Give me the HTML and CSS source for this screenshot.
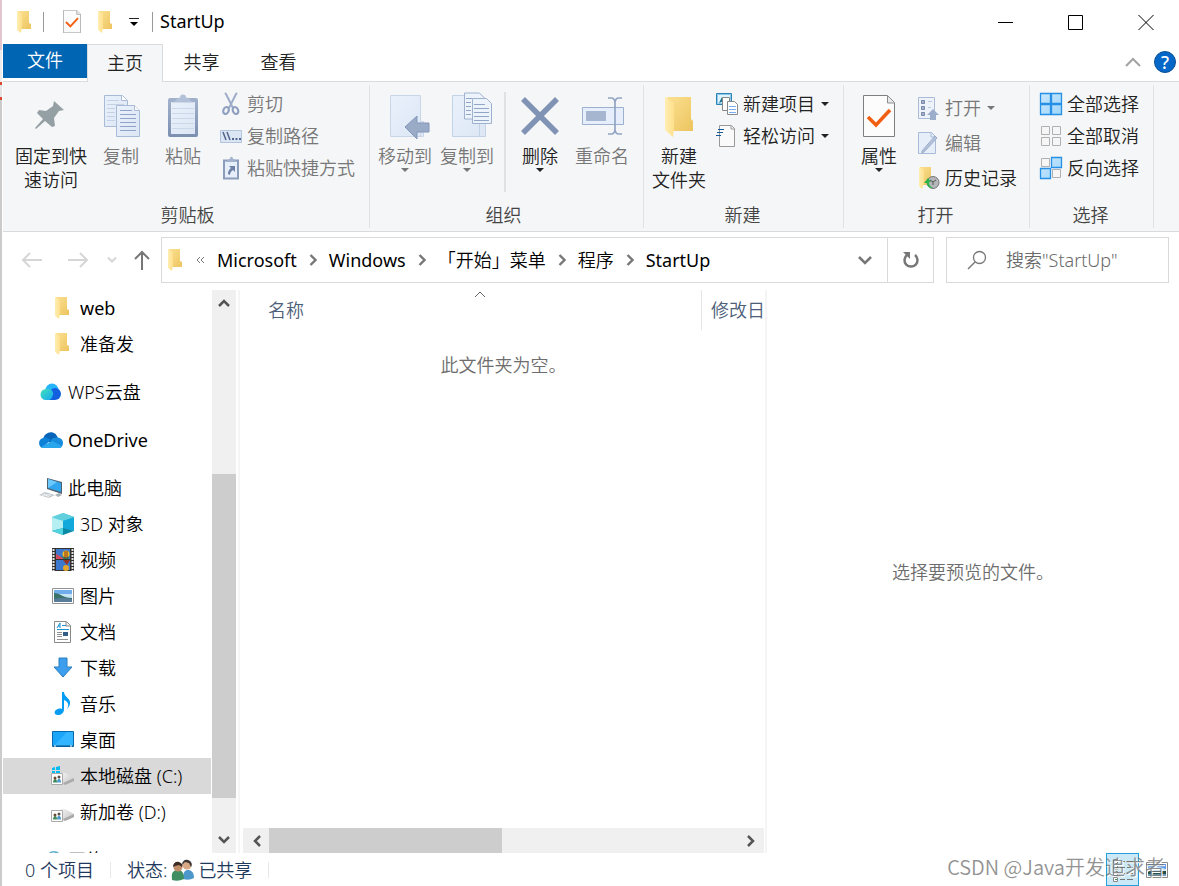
FILE: index.html
```html
<!DOCTYPE html>
<html lang="zh-CN">
<head>
<meta charset="utf-8">
<title>StartUp</title>
<link rel="stylesheet" href="styles.css">
</head>
<body>
<svg class="defs" aria-hidden="true">
  <defs>
    <linearGradient id="gold" x1="0" y1="0" x2="1" y2="1"><stop offset="0" stop-color="#fbe192"/><stop offset="1" stop-color="#edc45f"/></linearGradient>
    <linearGradient id="flap" x1="0" y1="0" x2="1" y2="0"><stop offset="0" stop-color="#ffeeb3"/><stop offset="1" stop-color="#ffdf8b"/></linearGradient>
    <linearGradient id="page" x1="0" y1="0" x2="1" y2="1"><stop offset="0" stop-color="#e9f1fb"/><stop offset="1" stop-color="#dce6f4"/></linearGradient>
    <linearGradient id="steel" x1="0" y1="0" x2="0" y2="1"><stop offset="0" stop-color="#a3b2cc"/><stop offset="1" stop-color="#7c8fb0"/></linearGradient>
    <linearGradient id="tile" x1="0" y1="0" x2="1" y2="1"><stop offset="0" stop-color="#c8e7fd"/><stop offset="1" stop-color="#9fd6fb"/></linearGradient>
    <linearGradient id="wps" x1="0" y1="0" x2="1" y2="1"><stop offset="0" stop-color="#43e3b8"/><stop offset="1" stop-color="#14a6f4"/></linearGradient>
    <linearGradient id="drivetop" x1="0" y1="0" x2="1" y2="1"><stop offset="0" stop-color="#f2f2f2"/><stop offset="1" stop-color="#c4c4c4"/></linearGradient>
    <symbol id="folder" viewBox="0 0 16 22"><path d="M2 0h11v12l2 1v5H4z" fill="url(#gold)"/><path d="M1 0l5 3v13l-1 6-4-3z" fill="url(#flap)"/></symbol>
    <symbol id="doccheck" viewBox="0 0 32 42"><path d="M.5.5h24l7 7v34H.5z" fill="#fcfcfc" stroke="#7f7f7f"/><path d="M24.500 1v7h7" fill="#e8e8e8" stroke="#8d8d8d"/><path d="M5 22l8 8L27 15" fill="none" stroke="#f25f12" stroke-width="3.500"/></symbol>
    <symbol id="chev" viewBox="0 0 8 12"><path d="M1.500 1l5 5-5 5" fill="none" stroke="#777" stroke-width="2.400"/></symbol>
    <symbol id="people" viewBox="0 0 24 22"><path d="M12 20c0-7 2-9 5-9s6 2 6 8q-5 3-11 1z" fill="#4c98cb"/><circle cx="16" cy="6" r="4.500" fill="#d8a984"/><path d="M11 6c0-4 3-6 6-5s5 4 3 7l-2-4-4-1z" fill="#3b3533"/><path d="M1 20c-1-7 2-9 6-9s6 3 6 9q-6 3-12 1z" fill="#3f8f62"/><circle cx="7" cy="8" r="4.500" fill="#c08e68"/><path d="M2 8c0-4 3-6 6-5s4 3 3 5l-3-2-4 1z" fill="#3d2c22"/></symbol>
    <symbol id="share" viewBox="0 0 12 12"><path d="M.5.500h11v11H.500z" fill="#fff" stroke="#aaa"/><path d="M2 9.500c0-4 4-5 4 0" fill="#3e8b58"/><path d="M6 9.500c0-5 4-5 4 0" fill="#4c98cb"/><circle cx="4" cy="5" r="1.500" fill="#6a4a38"/><circle cx="8" cy="4" r="1.500" fill="#5b5048"/></symbol>
  </defs>
</svg>
<div class="window">
  <header class="titlebar">
    <div class="quick">
      <svg class="fold"><use href="#folder"/></svg>
      <span class="rule"></span>
      <button class="bare" aria-label="属性"><svg width="18" height="23"><use href="#doccheck"/></svg></button>
      <button class="bare" aria-label="新建文件夹"><svg class="fold"><use href="#folder"/></svg></button>
      <button class="bare" aria-label="自定义快速访问工具栏"><svg width="10" height="10" viewBox="0 0 10 10"><path d="M0 1.500h10" stroke="#222"/><path d="M1 5h8L5 9z"/></svg></button>
      <span class="rule"></span>
    </div>
    <h1 class="latin">StartUp</h1>
    <div class="caption">
      <button class="bare" aria-label="最小化"><svg width="16" height="16"><path d="M0 8.500h15" stroke="#000"/></svg></button>
      <button class="bare" aria-label="最大化"><svg width="16" height="16"><path d="M.5 1.500h14v14H.5z" fill="none" stroke="#000"/></svg></button>
      <button class="bare" aria-label="关闭"><svg width="16" height="16"><path d="M.5 1l15 15M15.500 1l-15 15" stroke="#000"/></svg></button>
    </div>
  </header>
  <nav class="tabs">
    <button class="tab file">文件</button>
    <button class="tab active">主页</button>
    <button class="tab">共享</button>
    <button class="tab">查看</button>
    <div class="tabtools">
      <button class="bare" aria-label="折叠功能区"><svg width="16" height="10"><path d="M1 9l7-7 7 7" fill="none" stroke="#a3a3a3" stroke-width="2"/></svg></button>
      <button class="bare help" aria-label="帮助">?</button>
    </div>
  </nav>
  <section class="ribbon">
    <div class="group">
      <div class="tools">
        <button class="big pin"><svg viewBox="0 0 48 50"><path d="M27 7l10 9-5 1-5 7 1 8-3 1-7-6-9 8-1-1 8-9-6-6 2-3 7 1 7-5z" fill="#95a0a5"/></svg><span>固定到快速访问</span></button>
        <button class="big" disabled><svg viewBox="0 0 48 50"><g stroke="#a9bad6" fill="url(#page)"><path d="M7.500 1.500h18l5 5v26h-23z"/><path d="M19.500 11.500h18l5 5v26h-23z"/></g><path d="M24.500 1.500v5h6M37.500 11.500v5h5" fill="#fff" stroke="#a9bad6"/><path d="M10 6.500h12m-12 4h17m-17 4h8m-8 4h8m-8 4h8m-8 4h8" stroke="#c4d1e5"/><path d="M23 16.500h12m-12 4h16m-16 4h16m-16 4h16m-16 4h16m-16 4h16" stroke="#8fa4c6"/></svg>复制</button>
        <button class="big" disabled><svg viewBox="0 0 48 50"><rect x="9" y="4" width="30" height="39" rx="2" fill="url(#steel)"/><path d="M12 8h24v32H12z" fill="url(#page)"/><path d="M13 14.500h22m-22 5h22m-22 5h22m-22 5h22m-22 5h22" stroke="#cbd8ea"/><path d="M12 8.500c4 0 6-5 9-5a3 3 0 016 0c3 0 5 5 9 5z" fill="#b3c1d8"/></svg>粘贴</button>
        <div class="rows">
          <button class="small" disabled><svg viewBox="0 0 22 24"><path d="M5 1l1 1 7 14M17 1l-1 1-7 14" fill="none" stroke="#9dadc9" stroke-width="2"/><g fill="none" stroke="#8fa0c0" stroke-width="2.200"><ellipse cx="6" cy="18.500" rx="2.600" ry="3.600" transform="rotate(25 6 18.500)"/><ellipse cx="15.500" cy="18.500" rx="2.600" ry="3.600" transform="rotate(-25 15.500 18.500)"/></g></svg>剪切</button>
          <button class="small" disabled><svg viewBox="0 0 22 24"><path d="M.5 6.500h21v12H.5z" fill="#dbe6f5" stroke="#b3c3dc"/><path d="M3 8l3 8M7 8l3 8" stroke="#51658c" stroke-width="1.500"/><path d="M12 15h2m1.500 0h2m1.500 0h2" stroke="#51658c" stroke-width="2"/></svg>复制路径</button>
          <button class="small" disabled><svg viewBox="0 0 22 24"><path d="M4 4.500h14v18H4z" fill="#e6eefa" stroke="#8c9dbc" stroke-width="2"/><path d="M6 6l3-3h1c0-3 3-3 3 0h1l3 3z" fill="#a4b3cc"/><path d="M9 10h6v6l-2-2c-2 1-3 3-3 5l-2-1c0-3 1-4 3-6z" fill="#6d80a5"/></svg>粘贴快捷方式</button>
        </div>
      </div>
      <h2>剪贴板</h2>
    </div>
    <div class="group organize">
      <div class="tools">
        <button class="big" disabled><svg viewBox="0 0 48 50"><path d="M9.500 1.500h30v26h3v15h-33z" fill="url(#page)" stroke="#c9d6e8"/><path d="M39.500 28v14" stroke="#c9d6e8"/><path d="M24 33l12-11v7h12v9H36v7z" fill="#9aabc8" stroke="#8396b9"/></svg>移动到<i class="caret"></i></button>
        <button class="big" disabled><svg viewBox="0 0 48 50"><path d="M9.500 1.500h28v26h5v15h-33z" fill="url(#page)" stroke="#c4d2e6"/><path d="M36.500 28v14" stroke="#c4d2e6"/><g fill="#edf3fb" stroke="#9fb1cf"><path d="M21.500-1h15l5 5v21h-20z"/><path d="M29.500 4.500h14l5 5v20h-19z"/></g><path d="M31 10.500h11m-11 4h15m-15 4h15m-15 4h15m-15 4h15M23 4.500h6m-6 4h5m-5 4h5m-5 4h5m-5 4h5" stroke="#91a5c6"/></svg>复制到<i class="caret"></i></button>
        <span class="divider"></span>
        <button class="big"><svg viewBox="0 0 48 50"><path d="M7 5l34 34M41 5L7 39" stroke="#8193b4" stroke-width="5.500"/></svg>删除<i class="caret"></i></button>
        <button class="big" disabled><svg viewBox="0 0 48 50"><path d="M4.500 13.500h41v17h-41z" fill="#e5eefa" stroke="#9db0ce"/><path d="M8 17h20v10H8z" fill="#a6b5d0"/><path d="M30 4h4q3 1 3 5v26q0 4-3 5h-4M44 4h-4q-3 1-3 5v26q0 4 3 5h4" fill="none" stroke="#93a5c4" stroke-width="1.700"/></svg>重命名</button>
      </div>
      <h2>组织</h2>
    </div>
    <div class="group">
      <div class="tools">
        <button class="big"><svg viewBox="0 0 48 50"><path d="M12 3h24v22l2 2v10H18z" fill="url(#gold)"/><path d="M10 3l9 6v25l-1 9-8-7z" fill="url(#flap)"/></svg><span>新建<br>文件夹</span></button>
        <div class="rows">
          <button class="small"><svg viewBox="0 0 22 24"><path d="M.5 1.500h15v11H.5z" fill="#dff3ff" stroke="#2b83b5"/><path d="M1.500 2.500h13v9h-13z" fill="none" stroke="#8cc8ea"/><path d="M3 11l3-6 2 4z" fill="#176f8e"/><path d="M6.500 5.500h7v13h-7z" fill="#fff" stroke="#888"/><path d="M11.500 9.500h7l3 3v10h-10z" fill="#fff" stroke="#888"/><path d="M13 14.500h7m-7 3h7m-7 3h7" stroke="#77aef1"/></svg>新建项目<i class="caret"></i></button>
          <button class="small"><svg viewBox="0 0 22 24"><path d="M3.500 1.500h12l3 3v18h-15z" fill="#fafafa" stroke="#999"/><path d="M15 2v3h4" fill="none" stroke="#999"/><path d="M2 5.500h6m-7 3h6m-7 3h5" stroke="#155b9a"/></svg>轻松访问<i class="caret"></i></button>
        </div>
      </div>
      <h2>新建</h2>
    </div>
    <div class="group">
      <div class="tools">
        <button class="big"><svg viewBox="0 0 48 50"><use href="#doccheck" x="8" y="1" width="32" height="42"/></svg>属性<i class="caret"></i></button>
        <div class="rows loose">
          <button class="small" disabled><svg viewBox="0 0 22 24"><path d="M.5 1.500h16v21H.5z" fill="#edf2fb" stroke="#aabbd7"/><path d="M3.500 4.500h3v3h-3zm0 6h3v3h-3zm0 6h3v3h-3z" fill="#a5b3cc" stroke="#7788a9"/><path d="M10 5.500h4m-4 6h3" stroke="#b9c8df"/><path d="M9 19l6-6 6 6h-3v5h-6v-5z" fill="#9caccb"/></svg>打开<i class="caret"></i></button>
          <button class="small" disabled><svg viewBox="0 0 22 24"><path d="M.5 1.500h13l4 4v17H.5z" fill="#e5eef9" stroke="#a9bbd8"/><path d="M13 2v4h4" fill="none" stroke="#a9bbd8"/><path d="M4 20L17 5l2 2L6 21l-2 1z" fill="#b4c2da" stroke="#9bacca"/></svg>编辑</button>
          <button class="small"><svg viewBox="0 0 22 24"><path d="M2 1h11v18H4z" fill="url(#gold)"/><path d="M1 1l5 3v13l-2 6-3-3z" fill="url(#flap)"/><circle cx="15" cy="16.500" r="6" fill="#b4b7ba" stroke="#777"/><path d="M12 14l3 2 3-2m-3 2v3" fill="none" stroke="#555"/><path d="M15 22c-4 0-6-2-6-5H6l4-5 3 4h-2c0 3 1 4 4 6z" fill="#2eb34b"/></svg>历史记录</button>
        </div>
      </div>
      <h2>打开</h2>
    </div>
    <div class="group">
      <div class="tools">
        <div class="rows">
          <button class="small"><svg viewBox="0 0 22 24"><path d="M.5 1.500h10v10H.5zm11 0h10v10h-10zm-11 11h10v10H.5zm11 0h10v10h-10z" fill="url(#tile)" stroke="#2590e6" stroke-width="1.300"/></svg>全部选择</button>
          <button class="small"><svg viewBox="0 0 22 24"><path d="M1.500 2.500h8v8h-8zm11 0h8v8h-8zm-11 11h8v8h-8zm11 0h8v8h-8z" fill="#f6f6f6" stroke="#b0b0b0"/></svg>全部取消</button>
          <button class="small"><svg viewBox="0 0 22 24"><path d="M1.500 2.500h8v8h-8zm11 11h8v8h-8z" fill="#f6f6f6" stroke="#b0b0b0"/><path d="M11.500 1.500h10v10h-10zM.5 12.500h10v10H.5z" fill="url(#tile)" stroke="#2590e6" stroke-width="1.300"/></svg>反向选择</button>
        </div>
      </div>
      <h2>选择</h2>
    </div>
  </section>
  <div class="location">
    <div class="history">
      <button class="bare" aria-label="后退"><svg width="20" height="16"><path d="M1 8h19M8 1L1 8l7 7" fill="none" stroke="#d6d6d6" stroke-width="2"/></svg></button>
      <button class="bare" aria-label="前进"><svg width="20" height="16"><path d="M0 8h19M12 1l7 7-7 7" fill="none" stroke="#d6d6d6" stroke-width="2"/></svg></button>
      <button class="bare recent" aria-label="最近位置"><svg width="10" height="8"><path d="M1 1.500l4 4 4-4" fill="none" stroke="#d6d6d6" stroke-width="2"/></svg></button>
      <button class="bare up" aria-label="上移"><svg width="16" height="20"><path d="M8 2v18M1 9l7-7 7 7" fill="none" stroke="#777" stroke-width="2"/></svg></button>
    </div>
    <div class="address">
      <svg class="fold"><use href="#folder"/></svg>
      <nav class="crumbs">
        <svg width="9" height="8"><path d="M4 1L1 4l3 3M8 1L5 4l3 3" fill="none" stroke="#777"/></svg>
        <a class="latin" href="#">Microsoft</a><svg class="chev"><use href="#chev"/></svg>
        <a class="latin" href="#">Windows</a><svg class="chev"><use href="#chev"/></svg>
        <a href="#">「开始」菜单</a><svg class="chev"><use href="#chev"/></svg>
        <a href="#">程序</a><svg class="chev"><use href="#chev"/></svg>
        <a class="latin" href="#">StartUp</a>
      </nav>
      <button class="bare drop" aria-label="上一个位置"><svg width="14" height="10"><path d="M1 2l6 6 6-6" fill="none" stroke="#777" stroke-width="2.500"/></svg></button>
      <button class="bare refresh" aria-label="刷新"><svg width="18" height="18"><path d="M13 4a6.500 6.500 0 11-8 0" fill="none" stroke="#777" stroke-width="2.500"/><path d="M1 1h7v7z" fill="#777"/></svg></button>
    </div>
    <label class="search">
      <svg width="20" height="20"><circle cx="12.500" cy="7.500" r="6" fill="none" stroke="#777" stroke-width="1.300"/><path d="M8 12l-7 7" stroke="#777" stroke-width="1.500"/></svg>
      <input type="text" placeholder='搜索"StartUp"' aria-label="搜索">
    </label>
  </div>
  <main class="content">
    <ul class="tree">
      <li class="child latin"><svg viewBox="0 0 24 24"><use href="#folder" x="2" y="1" width="16" height="22"/></svg>web</li>
      <li class="child"><svg viewBox="0 0 24 24"><use href="#folder" x="2" y="1" width="16" height="22"/></svg>准备发</li>
      <li class="root"><svg viewBox="0 0 24 24"><circle cx="13" cy="10" r="6.500" fill="#26b5fb"/><path d="M16 20a6 6 0 100-12q-3 0-6 4v8z" fill="#1260de"/><path d="M7 20A5.500 5.500 0 017 9c5-1 8 3 7 6s-2 5-5 5z" fill="url(#wps)"/></svg>WPS云盘</li>
      <li class="root latin"><svg viewBox="0 0 24 24"><path d="M4 12C5 3 17 1 19 11L12 15z" fill="#0864b9"/><path d="M4 10c3-1 5 0 8 2l-9 8c-4-2-4-9 1-10z" fill="#0d80d8"/><path d="M12 12c3-4 12-3 12 3 0 3-2 5-4 5l-8-3z" fill="#178bdc"/><path d="M2 19l11-6 10 5q-1 2-3 2H4z" fill="#2aa7ec"/></svg>OneDrive</li>
      <li class="root"><svg viewBox="0 0 24 24"><path d="M8 2l15 4v12L8 13z" fill="#50616e"/><path d="M9 3l13 4v9L9 12z" fill="#31a6ef"/><path d="M9 12l9-6-9-3z" fill="#6dc8fb"/><path d="M0 19l6-3 10 3-6 3z" fill="#c3c9cd"/><path d="M3 19h9m-7-1l5 3" stroke="#f3f5f6"/><path d="M16 19l4-2 3 2-4 2z" fill="#a8b1b7"/></svg>此电脑</li>
      <li class="child"><svg viewBox="0 0 24 24"><path d="M0 5l11-4v15L0 19z" fill="#8ce1e9"/><path d="M11 1l11 4v14l-11-3z" fill="#1fb1d1"/><path d="M0 5l11-4 11 4-11 4z" fill="#61cfdd"/><path d="M0 6l11 3v8L0 19z" fill="#b5eff1"/><path d="M22 6l-11 3v8l11 2z" fill="#11a9dc"/><path d="M0 19l11-3 11 3-11 4z" fill="#0a8aa5"/><path d="M0 19l11-3v7z" fill="#51d5e0"/></svg>3D 对象</li>
      <li class="child"><svg viewBox="0 0 24 24"><path d="M0 0h22v23H0z" fill="#33312f"/><path d="M1.500 1v22M20.500 1v22" stroke="#e3e3e3" stroke-width="2" stroke-dasharray="2 1"/><path d="M4 1h14v10H4zm0 11h14v10H4z" fill="#3d78cf"/><path d="M4 6l7 4v1H4z" fill="#d44b60"/><circle cx="14" cy="6" r="3.500" fill="#f2bf20"/><path d="M11 12h7l-3 5z" fill="#963322"/><path d="M9 8l5 2 4-2-2 3h-4z" fill="#2e7b45"/><circle cx="14" cy="20" r="3" fill="#e4a52a"/><path d="M13 3v7m2-7v7" stroke="#8a2d20"/></svg>视频</li>
      <li class="child"><svg viewBox="0 0 24 24"><path d="M.5 4.500h21v15H.5z" fill="#fff" stroke="#929292"/><path d="M2 6h18v12H2z" fill="#6faeeb"/><path d="M2 10h18v4H2z" fill="#c6e4f6"/><path d="M2 9c6 0 9 5 18 5v1H2z" fill="#3b7368"/><path d="M2 15q9-2 18 0v3H2z" fill="#587d9b"/></svg>图片</li>
      <li class="child"><svg viewBox="0 0 24 24"><path d="M2.500 1.500h12l4 4v17h-16z" fill="#fff" stroke="#8a8a8a"/><path d="M14 2v4h4" fill="#eee" stroke="#8a8a8a"/><path d="M5 8l3-5v5m-2-2h2m2-.500h4M5 9.500h12" fill="none" stroke="#1d92d7"/><path d="M5 12.500h5m-5 2h5m-5 2h5m-5 3h11" stroke="#929292"/><path d="M11 12h5v4h-5z" fill="#335d87"/></svg>文档</li>
      <li class="child"><svg viewBox="0 0 24 24"><path d="M7 2h8v9h5l-9 10-9-10h5z" fill="#3c9eed" stroke="#297ebe"/></svg>下载</li>
      <li class="child"><svg viewBox="0 0 24 24"><path d="M10 0h2c0 5 7 6 6 12-1 3-2 4-3 5 3-5 0-8-3-9v9c0 4-3 6-6 6-5 0-4-5 0-6 2-1 4 0 4 0z" fill="#079cf4"/></svg>音乐</li>
      <li class="child"><svg viewBox="0 0 24 24"><path d="M.5 3.500h21v15H.5z" fill="#1ba6fa" stroke="#0869ad"/><path d="M2 18L15 4h6v14z" fill="#33b6ff"/><path d="M1 18h20" stroke="#07558d"/><path d="M2 18h2m14 0h2" stroke="#fff"/></svg>桌面</li>
      <li class="child selected"><svg viewBox="0 0 24 24"><path d="M0 4l3-1v3H0zm4-1l4-1v4H4zM0 7h3v2H0zm4 0h4v2H4z" fill="#00bcf2"/><path d="M9 9h4l9 5v3l-9 4h-4z" fill="url(#drivetop)"/><path d="M11 19l11-5v3l-9 4z" fill="#aaa"/><use href="#share" x="-1" y="9" width="12" height="12"/></svg>本地磁盘 (C:)</li>
      <li class="child"><svg viewBox="0 0 24 24"><path d="M9 9h4l9 5v3l-9 4h-4z" fill="url(#drivetop)"/><path d="M11 19l11-5v3l-9 4z" fill="#aaa"/><use href="#share" x="-1" y="10" width="12" height="12"/></svg>新加卷 (D:)</li>
      <li class="root"><svg viewBox="0 0 24 24"><circle cx="15" cy="11" r="8" fill="#5eaecb"/><path d="M11 6l4-2 3 4-4 2z" fill="#d9eef3"/></svg>网络</li>
    </ul>
    <div class="vscroll">
      <button class="bare" aria-label="向上滚动"><svg width="12" height="9"><path d="M1 8l5-5 5 5" fill="none" stroke="#555" stroke-width="2.500"/></svg></button>
      <span class="before"></span><span class="thumb"></span><span class="after"></span>
      <button class="bare" aria-label="向下滚动"><svg width="12" height="9"><path d="M1 1l5 5 5-5" fill="none" stroke="#555" stroke-width="2.500"/></svg></button>
    </div>
    <section class="files">
      <table>
        <thead><tr><th class="name" aria-sort="ascending">名称<svg class="sort" width="12" height="7"><path d="M1 6l5-5 5 5" fill="none" stroke="#666"/></svg></th><th>修改日</th></tr></thead>
        <tbody><tr><td colspan="2">此文件夹为空。</td></tr></tbody>
      </table>
      <div class="hscroll">
        <button class="bare" aria-label="向左滚动"><svg width="9" height="12"><path d="M8 1L3 6l5 5" fill="none" stroke="#555" stroke-width="2.500"/></svg></button>
        <span class="thumb"></span><span class="after"></span>
        <button class="bare" aria-label="向右滚动"><svg width="9" height="12"><path d="M1 1l5 5-5 5" fill="none" stroke="#555" stroke-width="2.500"/></svg></button>
      </div>
    </section>
    <aside class="preview">选择要预览的文件。</aside>
  </main>
  <footer class="status">
    <span class="cell">0 个项目</span>
    <span class="cell">状态:<svg width="24" height="22"><use href="#people"/></svg>已共享</span>
    <div class="views">
      <button class="bare on" aria-label="详细信息"><svg width="22" height="24"><g fill="#fff" stroke="#888"><path d="M1.500 1.500h4v4h-4zm0 6h4v4h-4zm0 6h4v4h-4zm0 6h4v4h-4z"/></g><path d="M8 3.500h5m2 0h6m-13 6h5m2 0h6m-13 6h5m2 0h6m-13 6h5m2 0h6" stroke="#777"/><path d="M3 3.500h2m-2 12h2" stroke="#d36a3b"/><path d="M3 9.500h2m-2 12h2" stroke="#478e52"/></svg></button>
      <button class="bare" aria-label="大缩略图"><svg width="22" height="16"><path d="M.5.5h21v15H.5z" fill="#fff" stroke="#888"/><path d="M2 2h18v6H2z" fill="#5696e8"/><path d="M2 6q8-3 18 1v4H2z" fill="#cfe5f5"/><path d="M2 9h18v3H2z" fill="#244f49"/><path d="M2 12h18v2H2z" fill="#6b9cb9"/></svg></button>
    </div>
    <span class="watermark">CSDN @Java开发追求者</span>
  </footer>
</div>
</body>
</html>
```
FILE: styles.css
```css
* { box-sizing: border-box; }
html, body { height: 100%; }
body {
  margin: 0;
  padding-left: 3px;
  background: linear-gradient(#e2c6cd 50px, #ececec 50px, #ececec 82px, #d9492f 82px, #d9492f 85px, #e4e4e4 85px, #e4e4e4 97px, #d9492f 97px, #d9492f 100px, #cbcbcb 100px) 0 0 / 2px 100% no-repeat #fff;
  color: #000;
  font: 18px/24px "Noto Sans", "Noto Sans CJK SC", sans-serif;
  font-weight: 350;
  overflow: hidden;
}
button, input { font: inherit; color: inherit; }
h1, h2 { margin: 0; font: inherit; }
svg { display: block; flex: none; overflow: visible; }
.latin { font-weight: 400; }
.defs { position: absolute; width: 0; height: 0; }
.bare { display: flex; align-items: center; justify-content: center; padding: 0; border: 0; background: none; }
.fold { width: 16px; height: 22px; }
.window { display: flex; flex-direction: column; height: 100vh; }

.titlebar { display: flex; align-items: center; height: 44px; flex: none; padding-bottom: 1px; }
.quick { display: flex; align-items: center; gap: 16px; padding-left: 13px; }
.quick .rule { margin-right: 3px; margin-left: -5px; }
.quick .rule:last-child { margin: 0 0 0 -3px; }
.rule { width: 1px; height: 20px; background: #999; }
.titlebar h1 { margin-left: 7px; padding-bottom: 1px; }
.caption { display: flex; gap: 4px; margin-left: auto; }
.caption .bare { width: 66px; height: 43px; }

.tabs { display: flex; height: 38px; flex: none; border-bottom: 1px solid #dadbdc; }
.tab { width: 77px; padding: 0 0 2px; border: 0; background: none; color: #222; }
.tab.file { width: 84px; height: 34px; background: #0065b3; color: #fff; }
.tab.active { width: 76px; height: 38px; background: #f5f6f7; border: 1px solid #dadbdc; border-bottom: 0; }
.tabtools { display: flex; align-items: center; gap: 13px; margin-left: auto; padding: 0 3px 2px 0; }
.help { width: 22px; height: 22px; border: 1px solid #0a4f94; border-radius: 50%; background: #0568c8; color: #fff; font-weight: 500; }

.ribbon { display: flex; flex: none; height: 150px; padding: 3px 0; background: #f5f6f7; border-bottom: 1px solid #dadbdc; }
.group { display: flex; flex-direction: column; flex: none; padding: 0 0 1px 4px; border-right: 1px solid #e1e2e4; }
.group:first-child { padding-left: 9px; }
.organize { padding-right: 10px; }
.tools { display: flex; flex: 1; }
.group h2 { padding-right: 6px; text-align: center; color: #444; }
.organize h2 { padding-right: 0; }
.big { display: flex; flex-direction: column; align-items: center; width: 62px; height: 108px; padding: 9px 0 0; border: 0; background: none; white-space: nowrap; color: #222; }
.big svg { width: 48px; height: 50px; }
.big.pin { width: 78px; padding-left: 3px; padding-right: 3px; white-space: normal; }
.big:disabled, .small:disabled { color: #777; }
.caret { display: block; width: 0; border: 4px solid transparent; border-top-color: currentColor; border-bottom: 0; }
.rows { display: flex; flex-direction: column; padding: 3px 14px 0 6px; }
.rows.loose { padding: 5px 12px 0 8px; }
.small { display: flex; align-items: center; height: 32px; padding: 0; border: 0; background: none; white-space: nowrap; color: #222; }
.loose .small { height: 35px; }
.small svg { width: 22px; height: 24px; margin-right: 5px; }
.small .caret { margin-left: 6px; }
.divider { width: 2px; height: 100px; margin: 7px 3px 0 6px; background: #dfe1e4; }

.location { display: flex; flex: none; height: 58px; padding: 5px 10px 7px 0; }
.history { display: flex; align-items: center; width: 158px; flex: none; padding-left: 19px; }
.history .bare { width: 20px; margin-right: 26px; }
.history .recent { width: 10px; margin: 0 17px 0 -7px; }
.history .up { width: 16px; margin: 0; }
.address { display: flex; flex: 1; align-items: center; min-width: 0; padding-left: 5px; border: 1px solid #d9d9d9; }
.crumbs { display: flex; align-items: center; gap: 12px; margin-left: 13px; padding-bottom: 1px; white-space: nowrap; }
.crumbs a { color: #000; text-decoration: none; }
.chev { width: 8px; height: 12px; }
.drop { width: 44px; height: 44px; margin-left: auto; }
.refresh { width: 46px; align-self: stretch; border-left: 1px solid #d9d9d9; }
.search { display: flex; align-items: center; flex: 0 0 223px; min-width: 0; margin-left: 12px; padding: 0 12px 0 20px; border: 1px solid #d9d9d9; }
.search input { width: 100%; min-width: 0; margin-left: 19px; padding: 0; border: 0; outline: 0; background: none; }
.search input::placeholder { color: #6a6a6a; opacity: 1; }

.content { display: flex; flex: 1; min-height: 0; }
.tree { flex: 0 0 208px; margin: 0 1px 0 0; padding: 0; list-style: none; overflow: hidden; white-space: nowrap; }
.tree li { display: flex; align-items: center; height: 36px; }
.tree svg { width: 24px; height: 24px; }
.tree .child { padding-left: 49px; gap: 4px; }
.tree .root { padding-left: 36px; gap: 5px; margin-top: 12px; }
.tree .selected { background: #d9d9d9; }
.vscroll { display: flex; flex-direction: column; flex: 0 0 24px; background: #f0f0f0; }
.vscroll .bare { height: 25px; }
.vscroll .before { flex: 159; }
.vscroll .thumb { flex: 324; }
.vscroll .after { flex: 30; }
.thumb { background: #cdcdcd; }
.files { display: flex; flex-direction: column; flex: 0 1 529px; min-width: 0; margin-left: 2px; padding: 0 1px 0 3px; border: solid #f5f5f5; border-width: 0 2px; }
.files table { width: 100%; table-layout: fixed; border-collapse: collapse; white-space: nowrap; }
.files th { position: relative; height: 40px; padding: 0 0 0 9px; overflow: hidden; text-align: left; font-weight: inherit; color: #4c607a; }
.files .name { width: 88%; padding-left: 25px; border-right: 1px solid #e5e5e5; }
.sort { position: absolute; top: 1px; left: calc(50% + 2px); }
.files td { height: 72px; padding: 0 0 2px; text-align: center; color: #6d6d6d; }
.hscroll { display: flex; height: 25px; margin-top: auto; background: #f0f0f0; }
.hscroll .bare { width: 26px; }
.hscroll .thumb { flex: 233; }
.hscroll .after { flex: 237; }
.preview { display: flex; flex: 1; align-items: center; justify-content: center; color: #6d6d6d; }

.status { position: relative; display: flex; align-items: center; height: 33px; flex: none; padding-left: 6px; color: #1e395b; }
.cell { display: flex; align-items: center; height: 16px; padding: 0 16px; border-right: 1px solid #e8e8e8; }
.cell svg { margin: 0 3px 0 4px; }
.views { display: flex; align-items: center; gap: 7px; margin: 0 11px 0 auto; }
.views .on { width: 33px; height: 33px; background: #cbe8f6; border: 1px solid #26a0da; }
.watermark { position: absolute; right: 14px; top: 2px; font-family: "Noto Sans CJK SC", sans-serif; font-size: 20px; color: rgba(110, 110, 110, .75); text-shadow: 1px 1px 0 #fff; white-space: nowrap; pointer-events: none; }
```
